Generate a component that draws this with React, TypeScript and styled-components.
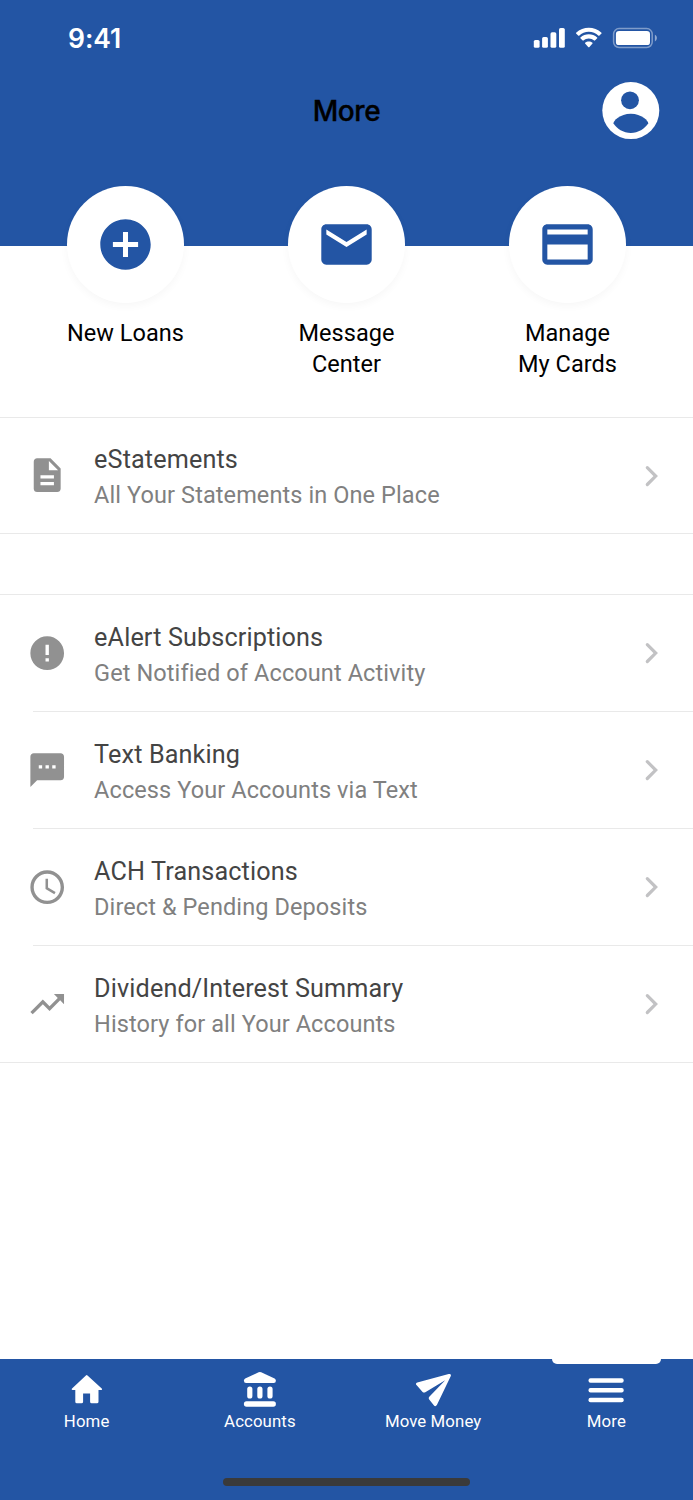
import React from "react";
import styled, { createGlobalStyle } from "styled-components";

const BLUE = "#2355a4";

const Global = createGlobalStyle`
  * { box-sizing: border-box; }
  body { margin: 0; background: #fff; font-family: Roboto, "Liberation Sans", sans-serif; }
`;

const Screen = styled.div`
  width: 693px;
  height: 1500px;
  display: flex;
  flex-direction: column;
  background: #fff;
  overflow: hidden;
`;
const Header = styled.header`
  height: 246px;
  flex: none;
  background: ${BLUE};
`;
const StatusBar = styled.div`
  height: 76px;
  padding: 0 36px 0 68px;
  display: flex;
  align-items: center;
  justify-content: space-between;
`;
const Time = styled.span`
  font: 600 26.5px/32px Inter, sans-serif;
  letter-spacing: -0.05px;
  color: #fff;
`;
const TitleBar = styled.div`
  height: 70px;
  padding: 0 34px;
  display: grid;
  grid-template-columns: 57px 1fr 57px;
  align-items: center;
`;
const Title = styled.h1`
  grid-column: 2;
  margin: 0;
  text-align: center;
  font: 500 28px/34px Inter, sans-serif;
  letter-spacing: -0.4px;
  -webkit-text-stroke: 0.35px #000;
  color: #000;
`;
const Shortcuts = styled.nav`
  height: 171px;
  flex: none;
  padding: 0 15px;
  display: grid;
  grid-template-columns: repeat(3, 221px);
`;
const Shortcut = styled.div`
  margin-top: -60px;
  display: flex;
  flex-direction: column;
  align-items: center;
`;
const Disc = styled.div`
  width: 117px;
  height: 117px;
  border-radius: 50%;
  background: #fff;
  color: ${BLUE};
  display: flex;
  align-items: center;
  justify-content: center;
  box-shadow: 0 3px 8px rgba(0, 0, 0, 0.035);
`;
const ShortcutLabel = styled.div`
  margin-top: 15px;
  font-size: 23.5px;
  line-height: 31px;
  letter-spacing: 0.05px;
  text-align: center;
  white-space: pre-line;
  color: #000;
`;
const Group = styled.section`
  flex: none;
  border-top: 1px solid #e9e9e9;
  border-bottom: 1px solid #e9e9e9;
  & + & { margin-top: 60px; }
`;
const Row = styled.div<{ $height: number }>`
  height: ${(p) => p.$height}px;
  padding: 0 21.5px 0 26.7px;
  display: flex;
  align-items: center;
  color: #919191;
`;
const Divider = styled.div`
  height: 1px;
  margin-left: 33px;
  background: #e9e9e9;
`;
const RowText = styled.div`
  flex: 1;
  margin-left: 27px;
  padding-top: 4px;
`;
const RowTitle = styled.div`
  font-size: 25.2px;
  line-height: 35px;
  letter-spacing: 0.13px;
  color: #444;
`;
const RowSub = styled.div`
  padding-top: 1px;
  font-size: 23.5px;
  line-height: 35px;
  letter-spacing: 0.1px;
  color: #808080;
`;
const TabBar = styled.footer`
  height: 141px;
  flex: none;
  margin-top: auto;
  background: ${BLUE};
  display: flex;
  flex-direction: column;
  align-items: center;
`;
const Tabs = styled.div`
  width: 100%;
  height: 123px;
  display: grid;
  grid-template-columns: repeat(4, 1fr);
`;
const Tab = styled.div<{ $active?: boolean }>`
  display: flex;
  flex-direction: column;
  align-items: center;
  color: #fff;
  &::before {
    content: "";
    width: 109px;
    height: 5px;
    border-radius: 0 0 6px 6px;
    background: ${(p) => (p.$active ? "#fff" : "transparent")};
  }
  svg { margin-top: 6px; }
`;
const TabLabel = styled.span`
  font-size: 16.8px;
  line-height: 22px;
  letter-spacing: 0.1px;
`;
const HomeIndicator = styled.div`
  width: 247px;
  height: 8px;
  margin-top: -4px;
  border-radius: 4px;
  background: #3a3a3a;
`;

const paths = {
  add: "M12 2C6.48 2 2 6.48 2 12s4.48 10 10 10 10-4.48 10-10S17.52 2 12 2zm5 11h-4v4h-2v-4H7v-2h4V7h2v4h4v2z",
  mail: "M20 4H4c-1.1 0-1.99.9-1.99 2L2 18c0 1.1.9 2 2 2h16c1.1 0 2-.9 2-2V6c0-1.1-.9-2-2-2zm0 4l-8 5-8-5V6l8 5 8-5v2z",
  card: "M20 4H4c-1.11 0-1.99.89-1.99 2L2 18c0 1.11.89 2 2 2h16c1.11 0 2-.89 2-2V6c0-1.11-.89-2-2-2zm0 14H4v-6h16v6zm0-10H4V6h16v2z",
  doc: "M14 2H6c-1.1 0-1.99.9-1.99 2L4 20c0 1.1.89 2 1.99 2H18c1.1 0 2-.9 2-2V8l-6-6zm2 16H8v-2h8v2zm0-4H8v-2h8v2zm-3-5V3.5L18.5 9H13z",
  alert: "M12 2C6.48 2 2 6.48 2 12s4.48 10 10 10 10-4.48 10-10S17.52 2 12 2zm1 15h-2v-2h2v2zm0-4h-2V7h2v6z",
  sms: "M20 2H4c-1.1 0-1.99.9-1.99 2L2 22l4-4h14c1.1 0 2-.9 2-2V4c0-1.1-.9-2-2-2zM9 11H7V9h2v2zm4 0h-2V9h2v2zm4 0h-2V9h2v2z",
  clock: "M11.99 2C6.47 2 2 6.48 2 12s4.47 10 9.99 10C17.52 22 22 17.52 22 12S17.52 2 11.99 2zM12 20c-4.42 0-8-3.58-8-8s3.58-8 8-8 8 3.58 8 8-3.58 8-8 8zm.5-13H11v6l5.25 3.15.75-1.23-4.5-2.67z",
  trend: "M16 6l2.29 2.29-4.88 4.88-4-4L2 16.59 3.41 18l6-6 4 4 6.3-6.29L22 12V6z",
};

const Icon = ({ name, size, inset = 0 }: { name: keyof typeof paths; size: number; inset?: number }) => (
  <svg
    width={size}
    height={size}
    viewBox={`${-inset} ${-inset} ${24 + 2 * inset} ${24 + 2 * inset}`}
    fill="currentColor"
  >
    <path d={paths[name]} />
  </svg>
);

const Chevron = () => (
  <svg width="40" height="40" viewBox="0 0 40 40" fill="none" stroke="#c2c2c4" strokeWidth="3.2" strokeLinecap="round">
    <path d="M15.3 11.7L23.7 20.1L15.3 28.5" />
  </svg>
);

const StatusIcons = () => (
  <svg width="124" height="24" viewBox="0 0 124 24" fill="#fff">
    <rect x="0.8" y="14" width="5.8" height="7.8" rx="1.6" />
    <rect x="9.1" y="11" width="5.8" height="10.8" rx="1.6" />
    <rect x="17.5" y="6.3" width="5.8" height="15.5" rx="1.6" />
    <rect x="26" y="2" width="5.8" height="19.8" rx="1.6" />
    <path d="M55.8 5.8c3.7 0 7.1 1.4 9.7 3.9.2.2.5.2.7 0l2.3-2.2c.2-.2.2-.5 0-.8-7.1-6.7-18.3-6.7-25.4 0-.2.3-.2.6 0 .8l2.3 2.2c.2.2.5.2.7 0 2.6-2.5 6-3.9 9.7-3.9z" />
    <path d="M55.8 12.4c2 0 3.9.8 5.4 2.1.2.2.5.2.7 0l2.3-2.3c.2-.2.2-.6 0-.8-4.7-4.3-12.1-4.3-16.8 0-.2.2-.2.6 0 .8l2.3 2.3c.2.2.5.2.7 0 1.5-1.4 3.4-2.1 5.4-2.1z" />
    <path d="M59.5 16.8c.2.2.2.5 0 .8l-3.3 3.6c-.2.2-.6.2-.8 0l-3.3-3.6c-.2-.2-.2-.6 0-.8 2.1-1.8 5.3-1.8 7.4 0z" />
    <rect x="80.6" y="2.6" width="38.6" height="18.9" rx="5.5" fill="none" stroke="#fff" strokeOpacity="0.42" strokeWidth="1.5" />
    <rect x="82.900" y="4.900" width="34.100" height="14.200" rx="3.2" />
    <path d="M121.9 8.8v6.6c1.2-.5 2-1.8 2-3.3s-.8-2.8-2-3.3z" opacity="0.5" />
  </svg>
);

const Avatar = () => (
  <svg width="58" height="58" viewBox="0 0 58 58">
    <circle cx="28.8" cy="28.6" r="28.5" fill="#fff" />
    <circle cx="28" cy="18.3" r="8.9" fill={BLUE} />
    <path d="M11.5 41.5C11 39 18 31.8 28.8 31.8S46.6 39 46.2 41.5C43 46.5 36 51 28.8 51S14.5 46.5 11.5 41.5z" fill={BLUE} />
  </svg>
);

const tabIcons = {
  home: (
    <path
      transform="translate(0.7 0)"
      d="M17.2 5.4q.8-.7 1.6 0L33.3 18.7q.5 1.2-.8 1.2H29.8V31.7q0 1.6-1.6 1.6H23q-1.6 0-1.6-1.6V23.4H14.4v8.3q0 1.6-1.6 1.6H8.2q-1.6 0-1.6-1.6V19.9H3.9q-1.3 0-.8-1.2z"
    />
  ),
  bank: (
    <g transform="translate(-0.4 0)">
      <path d="M17 2.3q1.3-.6 2.6 0L33 8.6q1.3.7 1.3 2.2 0 2.2-2.2 2.2H4.5q-2.2 0-2.2-2.2 0-1.5 1.3-2.2z" />
      <rect x="5.6" y="16.5" width="5.2" height="12" rx="2.6" />
      <rect x="15.7" y="16.5" width="5.2" height="12" rx="2.6" />
      <rect x="25.8" y="16.5" width="5.2" height="12" rx="2.6" />
      <rect x="2.3" y="31.2" width="32" height="5.5" rx="2.6" />
    </g>
  ),
  send: (
    <path d="M1.7 15.3q-1.7-1.8.6-2.7L33.7 4q3-.4 2 2.3L22 34.8q-1.5 2.5-3.2.5l-4.6-5.9q-1-1.3.1-2.6L30.2 10.2 10.3 22.2q-1.5.9-2.7-.3z" />
  ),
  menu: (
    <>
      <rect x="0.5" y="8.2" width="35.2" height="4.6" rx="2" />
      <rect x="0.5" y="17.9" width="35.2" height="4.6" rx="2" />
      <rect x="0.5" y="27.7" width="35.2" height="4.6" rx="2" />
    </>
  ),
};

type Item = [keyof typeof paths, string, string];
const groups: { rowHeight: number; items: Item[] }[] = [
  { rowHeight: 115, items: [["doc", "eStatements", "All Your Statements in One Place"]] },
  {
    rowHeight: 116,
    items: [
      ["alert", "eAlert Subscriptions", "Get Notified of Account Activity"],
      ["sms", "Text Banking", "Access Your Accounts via Text"],
      ["clock", "ACH Transactions", "Direct & Pending Deposits"],
      ["trend", "Dividend/Interest Summary", "History for all Your Accounts"],
    ],
  },
];
const shortcuts: [keyof typeof paths, string][] = [
  ["add", "New Loans"],
  ["mail", "Message\nCenter"],
  ["card", "Manage\nMy Cards"],
];
const tabs: [keyof typeof tabIcons, string][] = [
  ["home", "Home"],
  ["bank", "Accounts"],
  ["send", "Move Money"],
  ["menu", "More"],
];

export default function App() {
  return (
    <Screen>
      <Global />
      <Header>
        <StatusBar>
          <Time>9:41</Time>
          <StatusIcons />
        </StatusBar>
        <TitleBar>
          <Title>More</Title>
          <Avatar />
        </TitleBar>
      </Header>
      <Shortcuts>
        {shortcuts.map(([icon, label]) => (
          <Shortcut key={label}>
            <Disc>
              <Icon name={icon} size={61} inset={0.1} />
            </Disc>
            <ShortcutLabel>{label}</ShortcutLabel>
          </Shortcut>
        ))}
      </Shortcuts>
      {groups.map(({ rowHeight, items }, g) => (
        <Group key={g}>
          {items.map(([icon, title, sub], i) => (
            <React.Fragment key={title}>
              {i > 0 && <Divider />}
              <Row $height={rowHeight}>
                <Icon name={icon} size={40.4} />
                <RowText>
                  <RowTitle>{title}</RowTitle>
                  <RowSub>{sub}</RowSub>
                </RowText>
                <Chevron />
              </Row>
            </React.Fragment>
          ))}
        </Group>
      ))}
      <TabBar>
        <Tabs>
          {tabs.map(([icon, label]) => (
            <Tab key={label} $active={label === "More"}>
              <svg width="36.6" height="40" viewBox="0 0 36.6 40" fill="currentColor">
                {tabIcons[icon]}
              </svg>
              <TabLabel>{label}</TabLabel>
            </Tab>
          ))}
        </Tabs>
        <HomeIndicator />
      </TabBar>
    </Screen>
  );
}
